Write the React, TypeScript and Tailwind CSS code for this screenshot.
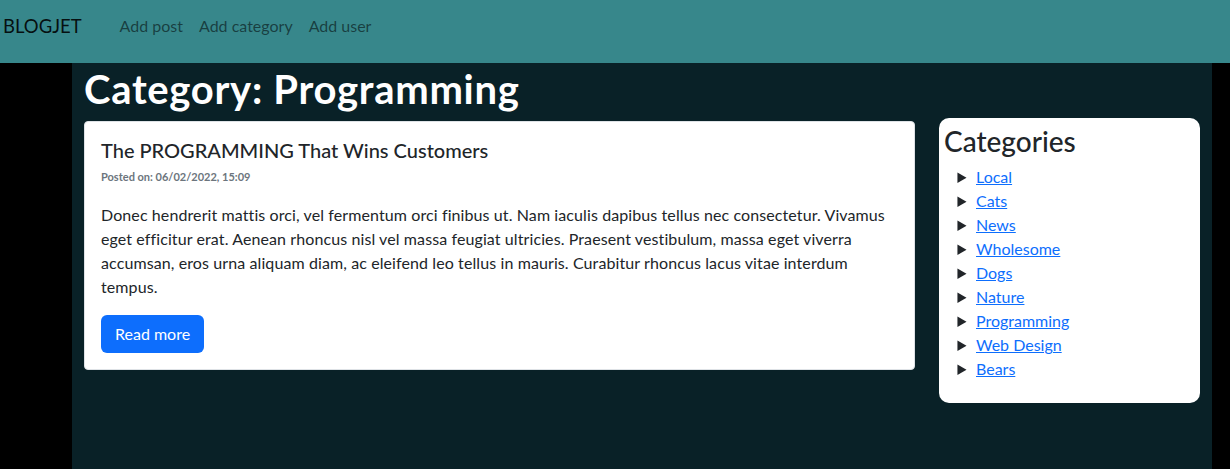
import React from "react";

const cats = ["Local", "Cats", "News", "Wholesome", "Dogs", "Nature", "Programming", "Web Design", "Bears"];

export default function App() {
  return (
    <div className="min-h-[469px] bg-black" style={{ fontFamily: 'Lato, "Open Sans", sans-serif' }}>
      <nav className="h-[63px] bg-[#37878b] flex items-start pt-[11px]">
        <span className="ml-[3px] text-[18.5px] leading-[30px] text-black/90">BLOGJET</span>
        <div className="flex ml-[30px] text-[16px] leading-[30px] text-black/55">
          <a className="px-2">Add post</a>
          <a className="px-2">Add category</a>
          <a className="px-2">Add user</a>
        </div>
      </nav>
      <main className="mx-auto ml-[72px] w-[1140px] min-h-[406px] bg-[#092127] px-3">
        <h1 className="text-[40px] leading-[48px] font-bold tracking-[0.7px] text-white pt-[2px] mb-[5px]">Category: Programming</h1>
        <div className="flex gap-[24px] items-start">
          <div className="w-[831px] mt-[3px] bg-white border border-[#dee2e6] rounded-[4px] p-4 text-[#212529]">
            <h5 className="text-[20px] leading-[24px] font-medium">The PROGRAMMING That Wins Customers</h5>
            <div className="mt-2 mb-[19px] text-[11px] leading-[14px] font-bold text-[#6c757d]">Posted on: 06/02/2022, 15:09</div>
            <p className="text-[16px] leading-[24px] tracking-[0.1px] mb-4 pr-[10px]">
              Donec hendrerit mattis orci, vel fermentum orci finibus ut. Nam iaculis dapibus tellus nec consectetur. Vivamus eget efficitur erat. Aenean rhoncus nisl vel massa feugiat ultricies. Praesent vestibulum, massa eget viverra accumsan, eros urna aliquam diam, ac eleifend leo tellus in mauris. Curabitur rhoncus lacus vitae interdum tempus.
            </p>
            <button className="h-[38px] px-[14px] rounded-[6px] bg-[#0d6efd] text-white text-[16px] leading-[24px]">Read more</button>
          </div>
          <aside className="w-[261px] bg-white rounded-[10px] px-[5px] pt-[4px] pb-[22px] text-[#212529]">
            <h3 className="text-[28px] leading-[38px] font-medium mb-[5px]">Categories</h3>
            <ul className="list-[disclosure-closed] pl-[32px] text-[16px] leading-[24px]">
              {cats.map((c) => (
                <li key={c}>
                  <a className="text-[#0d6efd] underline">{c}</a>
                </li>
              ))}
            </ul>
          </aside>
        </div>
      </main>
    </div>
  );
}
